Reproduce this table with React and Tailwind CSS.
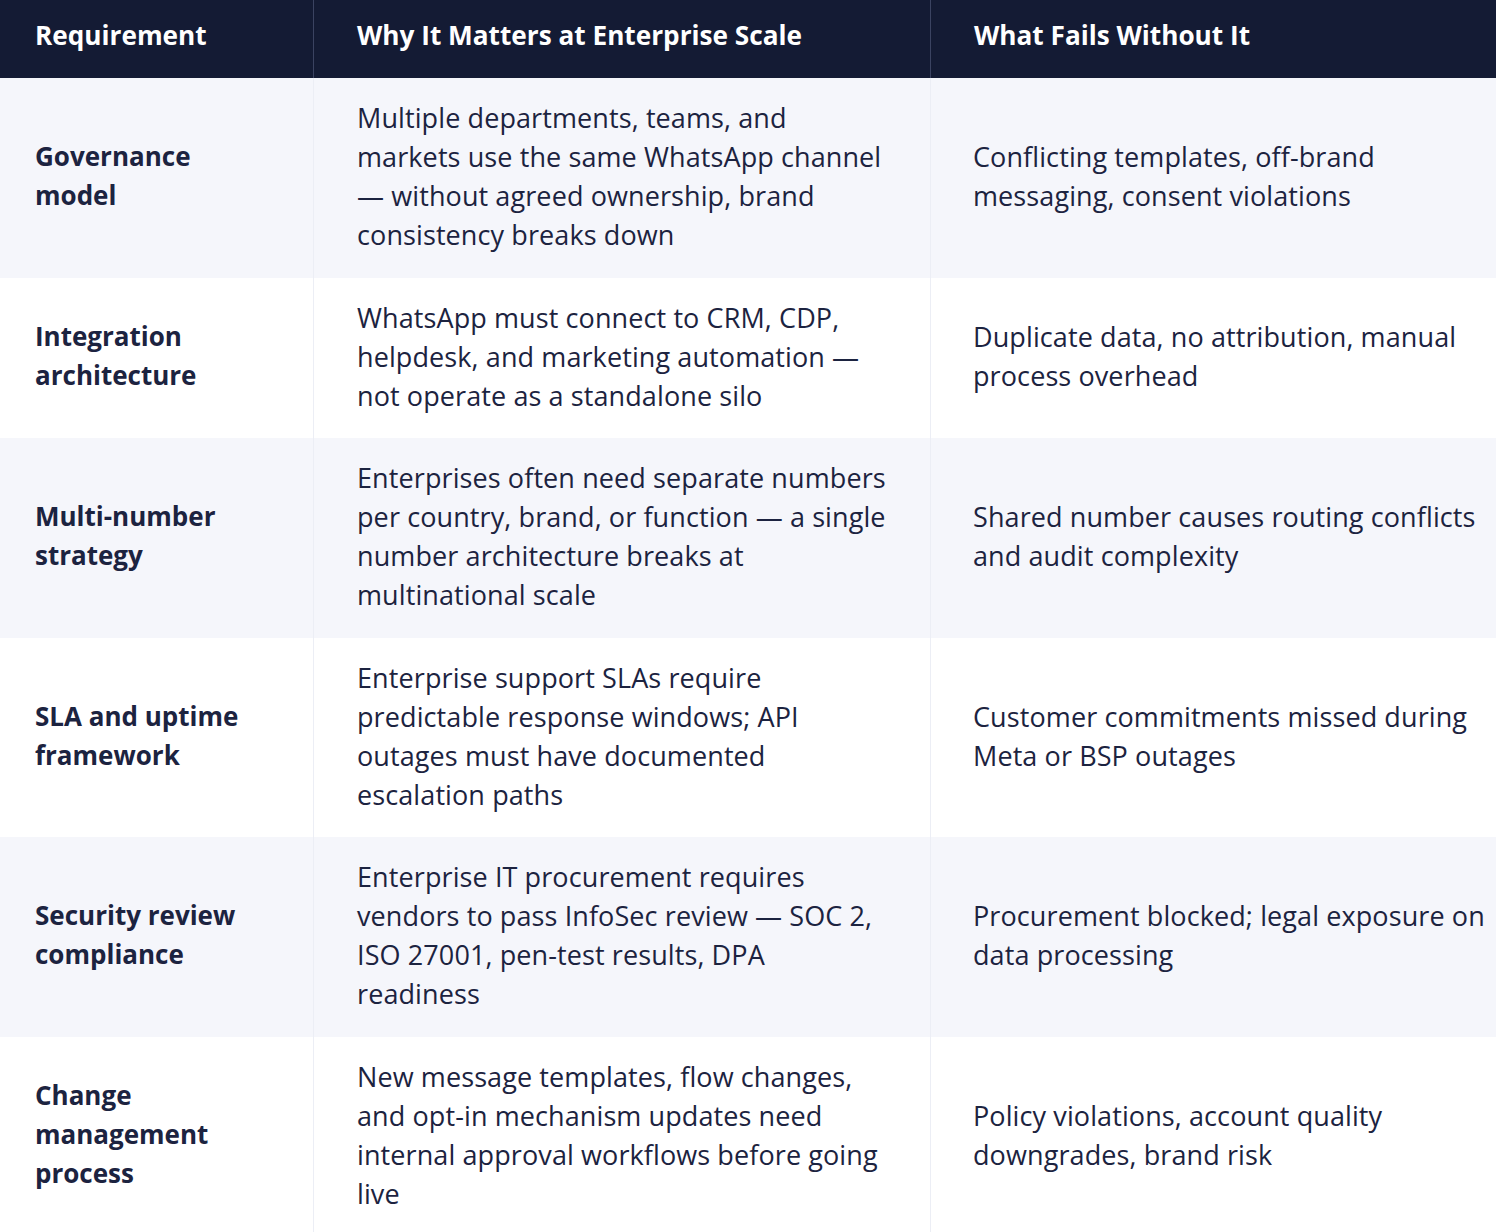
import React from 'react'

const rows = [
  {
    req: ['Governance', 'model'],
    why: [
      'Multiple departments, teams, and',
      'markets use the same WhatsApp channel',
      '— without agreed ownership, brand',
      'consistency breaks down',
    ],
    fail: ['Conflicting templates, off-brand', 'messaging, consent violations'],
  },
  {
    req: ['Integration', 'architecture'],
    why: [
      'WhatsApp must connect to CRM, CDP,',
      'helpdesk, and marketing automation —',
      'not operate as a standalone silo',
    ],
    fail: ['Duplicate data, no attribution, manual', 'process overhead'],
  },
  {
    req: ['Multi-number', 'strategy'],
    why: [
      'Enterprises often need separate numbers',
      'per country, brand, or function — a single',
      'number architecture breaks at',
      'multinational scale',
    ],
    fail: ['Shared number causes routing conflicts', 'and audit complexity'],
  },
  {
    req: ['SLA and uptime', 'framework'],
    why: [
      'Enterprise support SLAs require',
      'predictable response windows; API',
      'outages must have documented',
      'escalation paths',
    ],
    fail: ['Customer commitments missed during', 'Meta or BSP outages'],
  },
  {
    req: ['Security review', 'compliance'],
    why: [
      'Enterprise IT procurement requires',
      'vendors to pass InfoSec review — SOC 2,',
      'ISO 27001, pen-test results, DPA',
      'readiness',
    ],
    fail: ['Procurement blocked; legal exposure on', 'data processing'],
  },
  {
    req: ['Change', 'management', 'process'],
    why: [
      'New message templates, flow changes,',
      'and opt-in mechanism updates need',
      'internal approval workflows before going',
      'live',
    ],
    fail: ['Policy violations, account quality', 'downgrades, brand risk'],
  },
]

function Lines({ lines }) {
  return lines.map((l, i) => (
    <span key={i} className="block whitespace-nowrap">
      {l}
    </span>
  ))
}

export default function App() {
  return (
    <div className="w-[1496px] overflow-hidden bg-white font-['Open_Sans','Noto_Sans',sans-serif] text-[27px] leading-[39px] tracking-[0.1px] text-[#1c2340]">
      <div className="grid grid-cols-[314px_617px_1fr] bg-[#141b34] text-[26.2px] font-bold tracking-normal text-white">
        <div className="h-[78px] border-r border-[#3b4361] pt-[16px] pl-[35px]">Requirement</div>
        <div className="h-[78px] border-r border-[#3b4361] pt-[16px] pl-[43px]">Why It Matters at Enterprise Scale</div>
        <div className="h-[78px] pt-[16px] pl-[43px]">What Fails Without It</div>
      </div>
      {rows.map((r, i) => (
        <div
          key={i}
          className={`grid grid-cols-[314px_617px_1fr] ${i % 2 === 0 ? 'bg-[#f5f6fb]' : 'bg-white'}`}
        >
          <div className="flex items-center border-r border-[#eceef5] pt-[20px] pb-[23.5px] pl-[35px] text-[26px] font-bold tracking-normal">
            <div>
              <Lines lines={r.req} />
            </div>
          </div>
          <div className="flex items-center border-r border-[#eceef5] pt-[20px] pb-[23.5px] pl-[43px]">
            <div>
              <Lines lines={r.why} />
            </div>
          </div>
          <div className="flex items-center pt-[20px] pb-[23.5px] pl-[42px]">
            <div>
              <Lines lines={r.fail} />
            </div>
          </div>
        </div>
      ))}
    </div>
  )
}
